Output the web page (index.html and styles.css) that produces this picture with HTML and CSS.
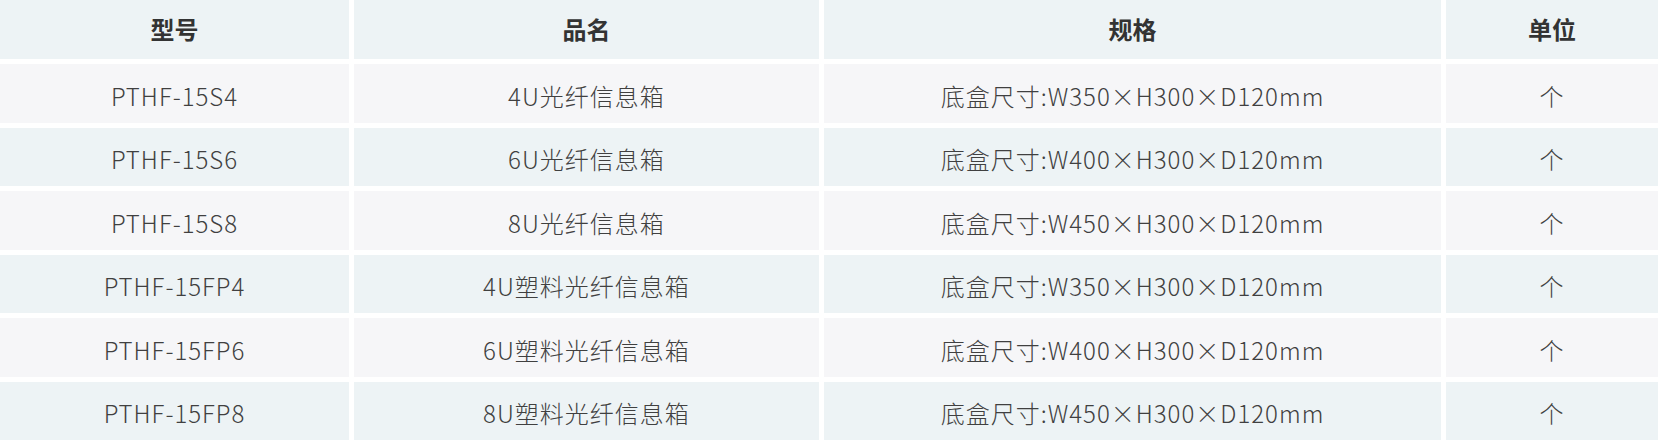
FILE: index.html
```html
<!DOCTYPE html>
<html lang="zh-CN">
<head>
<meta charset="utf-8">
<title>光纤信息箱</title>
<link rel="stylesheet" href="styles.css">
</head>
<body>
<div class="table">
  <div class="cell head">型号</div>
  <div class="cell head">品名</div>
  <div class="cell head">规格</div>
  <div class="cell head">单位</div>

  <div class="cell odd">PTHF-15S4</div>
  <div class="cell odd">4U光纤信息箱</div>
  <div class="cell odd">底盒尺寸:W350×H300×D120mm</div>
  <div class="cell odd">个</div>

  <div class="cell even">PTHF-15S6</div>
  <div class="cell even">6U光纤信息箱</div>
  <div class="cell even">底盒尺寸:W400×H300×D120mm</div>
  <div class="cell even">个</div>

  <div class="cell odd">PTHF-15S8</div>
  <div class="cell odd">8U光纤信息箱</div>
  <div class="cell odd">底盒尺寸:W450×H300×D120mm</div>
  <div class="cell odd">个</div>

  <div class="cell even">PTHF-15FP4</div>
  <div class="cell even">4U塑料光纤信息箱</div>
  <div class="cell even">底盒尺寸:W350×H300×D120mm</div>
  <div class="cell even">个</div>

  <div class="cell odd">PTHF-15FP6</div>
  <div class="cell odd">6U塑料光纤信息箱</div>
  <div class="cell odd">底盒尺寸:W400×H300×D120mm</div>
  <div class="cell odd">个</div>

  <div class="cell even">PTHF-15FP8</div>
  <div class="cell even">8U塑料光纤信息箱</div>
  <div class="cell even">底盒尺寸:W450×H300×D120mm</div>
  <div class="cell even">个</div>
</div>
</body>
</html>
```

FILE: styles.css
```css
html, body {
  margin: 0;
  padding: 0;
  background: #ffffff;
}

.table {
  width: 1658px;
  display: grid;
  grid-template-columns: 349fr 465fr 617fr 212fr;
  grid-template-rows: 59px repeat(6, 58.5px);
  column-gap: 5px;
  row-gap: 5px;
}

.cell {
  display: flex;
  align-items: center;
  justify-content: center;
  font-family: "Noto Sans CJK SC Light", "Noto Sans CJK SC DemiLight", "Noto Sans CJK SC", sans-serif;
  font-size: 24px;
  font-weight: 300;
  letter-spacing: 1px;
  color: #404040;
  white-space: nowrap;
  padding-top: 4px;
  box-sizing: border-box;
}

.head {
  background: #edf3f5;
  font-family: "Noto Sans CJK SC", sans-serif;
  font-weight: 700;
  letter-spacing: 0;
  color: #333333;
  padding-top: 0;
  padding-bottom: 3px;
}

.odd {
  background: #f6f6f8;
}

.even {
  background: #edf3f5;
}
```
